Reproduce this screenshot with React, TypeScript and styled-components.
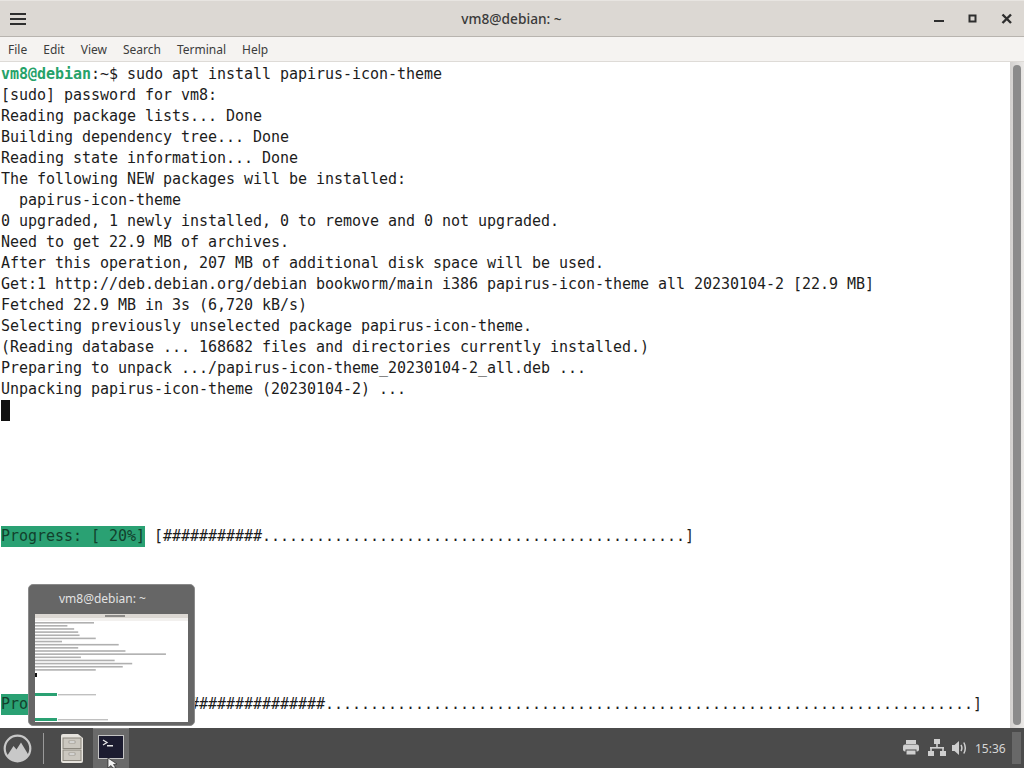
import styled, { createGlobalStyle } from "styled-components";

const GlobalStyle = createGlobalStyle`
  html, body {
    margin: 0;
    padding: 0;
    height: 100%;
    overflow: hidden;
    background: #fff;
  }
`;

const outputBefore = [
  "[sudo] password for vm8:",
  "Reading package lists... Done",
  "Building dependency tree... Done",
  "Reading state information... Done",
  "The following NEW packages will be installed:",
  "  papirus-icon-theme",
  "0 upgraded, 1 newly installed, 0 to remove and 0 not upgraded.",
  "Need to get 22.9 MB of archives.",
  "After this operation, 207 MB of additional disk space will be used.",
  "Get:1 http://deb.debian.org/debian bookworm/main i386 papirus-icon-theme all 20230104-2 [22.9 MB]",
  "Fetched 22.9 MB in 3s (6,720 kB/s)",
  "Selecting previously unselected package papirus-icon-theme.",
  "(Reading database ... 168682 files and directories currently installed.)",
  "Preparing to unpack .../papirus-icon-theme_20230104-2_all.deb ...",
  "Unpacking papirus-icon-theme (20230104-2) ...",
];

const menus = ["File", "Edit", "View", "Search", "Terminal", "Help"];

const App = () => {
  return (
    <Page>
      <GlobalStyle />
      <TitleBar>
        <TitleSide>
          <MenuIcon>
            <span />
            <span />
            <span />
          </MenuIcon>
        </TitleSide>
        <WindowTitle>vm8@debian: ~</WindowTitle>
        <WindowButtons>
          <svg width="12" height="12" viewBox="0 0 12 12">
            <rect x="1" y="7" width="10" height="2" fill="#2e2e2e" />
          </svg>
          <svg width="12" height="12" viewBox="0 0 12 12">
            <rect x="2.5" y="2.5" width="6" height="6" fill="none" stroke="#2e2e2e" strokeWidth="2" />
          </svg>
          <svg width="12" height="12" viewBox="0 0 12 12">
            <path d="M1.5 1.5 L10 10 M10 1.5 L1.5 10" stroke="#2e2e2e" strokeWidth="2.4" />
          </svg>
        </WindowButtons>
      </TitleBar>

      <MenuBar>
        {menus.map((m) => (
          <MenuItem key={m}>{m}</MenuItem>
        ))}
      </MenuBar>

      <TerminalArea>
        <Screen>
          <Line>
            <Prompt>vm8@debian</Prompt>:~$ sudo apt install papirus-icon-theme
          </Line>
          {outputBefore.map((l, i) => (
            <Line key={i}>{l}</Line>
          ))}
          <Line>
            <Cursor />
          </Line>
          <Blank $rows={5} />
          <Line>
            <ProgressLabel>Progress: [ 20%]</ProgressLabel>
            {" [" + "#".repeat(11) + ".".repeat(47) + "]"}
          </Line>
          <Blank $rows={7} />
          <Line>
            <ProgressLabel>Progress: [ 20%]</ProgressLabel>
            {" [" + "#".repeat(18) + ".".repeat(72) + "]"}
          </Line>
        </Screen>
        <ScrollTrack>
          <ScrollThumb />
        </ScrollTrack>
      </TerminalArea>

      <Taskbar>
        <TaskLeft>
          <LogoButton>
            <svg width="29" height="29" viewBox="0 0 29 29">
              <circle cx="14.5" cy="14.5" r="12.8" fill="#4b4b4b" stroke="#c8c8c8" strokeWidth="2.2" />
              <path d="M4 22 L10.5 12 L13.5 15.5 L18 8.5 L25.5 21 Q21 27 14.5 27 Q8 27 4 22 Z" fill="#c8c8c8" />
            </svg>
          </LogoButton>
          <Separator />
          <AppButton>
            <svg width="22" height="29" viewBox="0 0 22 29">
              <path d="M2 0 H17 L22 4 V27 Q22 29 20 29 H2 Q0 29 0 27 V2 Q0 0 2 0 Z" fill="#e6e3dd" />
              <rect x="2" y="4" width="18" height="10.5" fill="#cbc7bf" stroke="#8c887f" />
              <rect x="2" y="16" width="18" height="10.5" fill="#cbc7bf" stroke="#8c887f" />
              <rect x="8" y="7" width="6" height="2" fill="#f2f2f2" stroke="#77736b" strokeWidth="0.5" />
              <rect x="8" y="19" width="6" height="2" fill="#f2f2f2" stroke="#77736b" strokeWidth="0.5" />
            </svg>
          </AppButton>
          <AppButton $active>
            <TerminalIcon width="26" height="24" viewBox="0 0 26 24">
              <rect x="0.5" y="0.5" width="25" height="23" fill="#1c1c30" stroke="#c4c4c4" />
              <path d="M5 5 L9 7.5 L5 10" fill="none" stroke="#e8e8e8" strokeWidth="1.3" />
              <rect x="9" y="10" width="6" height="1.5" fill="#e8e8e8" />
            </TerminalIcon>
            <MousePointer width="12" height="10" viewBox="0 0 12 10">
              <path d="M1 0 L1 10 L4 7.5 L6 10 L9 10 L6.5 6.5 L10 6 Z" fill="#f2f2f2" stroke="#222" strokeWidth="0.7" />
            </MousePointer>
          </AppButton>
        </TaskLeft>
        <Tray>
          <svg width="18" height="16" viewBox="0 0 18 16">
            <rect x="4" y="0" width="10" height="4" fill="#cfcfcf" />
            <rect x="1" y="4.5" width="16" height="7" rx="2" fill="#cfcfcf" />
            <rect x="4" y="10" width="10" height="5" fill="#cfcfcf" stroke="#4a4a4a" />
          </svg>
          <svg width="18" height="18" viewBox="0 0 18 18">
            <rect x="6" y="0" width="6" height="5" fill="#cfcfcf" />
            <rect x="8.2" y="5" width="1.6" height="3.5" fill="#cfcfcf" />
            <rect x="2" y="8" width="14" height="1.6" fill="#cfcfcf" />
            <rect x="2.2" y="9" width="1.6" height="3" fill="#cfcfcf" />
            <rect x="14.2" y="9" width="1.6" height="3" fill="#cfcfcf" />
            <rect x="0" y="12" width="6" height="5" fill="#cfcfcf" />
            <rect x="12" y="12" width="6" height="5" fill="#cfcfcf" />
          </svg>
          <VolumeIcon width="15" height="16" viewBox="0 0 15 16">
            <path d="M0 5 H2.5 L7 1 V15 L2.5 11 H0 Z" fill="#cfcfcf" />
            <path d="M9 5 Q10.8 8 9 11 M11.8 2.5 Q14.8 8 11.8 13.5" fill="none" stroke="#cfcfcf" strokeWidth="1.5" />
          </VolumeIcon>
          <Clock>15:36</Clock>
          <TrayHandle />
        </Tray>
      </Taskbar>

      <Preview>
        <PreviewTitle>vm8@debian: ~</PreviewTitle>
        <PreviewShot>
          <svg width="153" height="108" viewBox="0 0 153 108">
            <rect width="153" height="108" fill="#fff" />
            <rect width="153" height="4" fill="#dcd8d3" />
            <rect x="70" y="1" width="20" height="2" fill="#8c8a88" />
            <rect y="4" width="153" height="3" fill="#f2f0ee" />
            <rect x="0" y="8" width="59" height="1.6" fill="#b0b0b0" />
            {outputBefore.map((l, i) => (
              <rect key={i} x="0" y={11 + i * 3.15} width={l.length * 1.35} height="1.6" fill="#b0b0b0" />
            ))}
            <rect x="0" y="59" width="2" height="4" fill="#111" />
            <rect x="0" y="79" width="22" height="3" fill="#2aa173" />
            <rect x="23" y="80" width="38" height="1.4" fill="#c0c0c0" />
            <rect x="0" y="104" width="22" height="3" fill="#2aa173" />
            <rect x="23" y="105" width="50" height="1.4" fill="#c0c0c0" />
          </svg>
        </PreviewShot>
      </Preview>
    </Page>
  );
};

const Page = styled.div`
  position: relative;
  width: 1024px;
  height: 768px;
  display: flex;
  flex-direction: column;
  overflow: hidden;
  background: #fff;
`;

const TitleBar = styled.div`
  height: 37px;
  flex: none;
  box-sizing: border-box;
  display: flex;
  align-items: center;
  padding: 0 10px;
  background: #dcd8d3;
  border-top: 1px solid #e8e5e1;
  border-bottom: 1px solid #b8b4af;
`;

const TitleSide = styled.div`
  width: 90px;
`;

const MenuIcon = styled.div`
  width: 16px;
  display: flex;
  flex-direction: column;
  gap: 3px;
  span {
    display: block;
    height: 2px;
    background: #2e2e2e;
  }
`;

const WindowTitle = styled.div`
  flex: 1;
  text-align: center;
  font: 500 13.7px "Noto Sans", sans-serif;
  color: #3a3a3a;
`;

const WindowButtons = styled.div`
  width: 90px;
  box-sizing: border-box;
  display: flex;
  align-items: center;
  justify-content: flex-end;
  gap: 22px;
  margin-right: 1px;
`;

const MenuBar = styled.div`
  height: 25px;
  flex: none;
  box-sizing: border-box;
  display: flex;
  align-items: center;
  gap: 16px;
  padding-left: 8px;
  background: #f5f3f1;
  border-bottom: 1px solid #dedbd7;
`;

const MenuItem = styled.div`
  font: 12px "Noto Sans", sans-serif;
  color: #3c3c3c;
`;

const TerminalArea = styled.div`
  flex: 1;
  min-height: 0;
  display: flex;
  background: #fff;
`;

const Screen = styled.div`
  flex: 1;
  padding: 2px 0 0 1px;
  font: 15px/21px "DejaVu Sans Mono", monospace;
  letter-spacing: -0.03px;
  color: #1c1c1c;
  white-space: pre;
  overflow: hidden;
`;

const Line = styled.div`
  height: 21px;
`;

const Blank = styled.div<{ $rows: number }>`
  height: ${(p) => p.$rows * 21}px;
`;

const Prompt = styled.span`
  color: #26a269;
  font-weight: bold;
`;

const Cursor = styled.span`
  display: inline-block;
  width: 9px;
  height: 21px;
  background: #111;
`;

const ProgressLabel = styled.span`
  display: inline-block;
  background: #2aa173;
  color: #12402c;
`;

const ScrollTrack = styled.div`
  width: 14px;
  flex: none;
  box-sizing: border-box;
  padding: 3px;
  background: linear-gradient(to right, #d2d0ce, #ebe9e7);
`;

const ScrollThumb = styled.div`
  height: 100%;
  background: #8b8b8b;
  border-radius: 4px;
`;

const Taskbar = styled.div`
  height: 40px;
  flex: none;
  display: flex;
  align-items: center;
  justify-content: space-between;
  background: #4b4b4b;
`;

const TaskLeft = styled.div`
  display: flex;
  align-items: center;
  height: 100%;
`;

const LogoButton = styled.div`
  width: 34px;
  display: flex;
  justify-content: center;
`;

const Separator = styled.div`
  width: 1px;
  height: 31px;
  margin: 0 10px 0 9px;
  background: #9a9a9a;
`;

const AppButton = styled.div<{ $active?: boolean }>`
  position: relative;
  width: 36px;
  height: 100%;
  box-sizing: border-box;
  margin-left: ${(p) => (p.$active ? "3px" : "0")};
  display: flex;
  align-items: center;
  justify-content: center;
  background: ${(p) => (p.$active ? "#6a6a6a" : "transparent")};
  border-top: ${(p) => (p.$active ? "1px solid #868686" : "none")};
`;

const TerminalIcon = styled.svg`
  margin-bottom: 3px;
`;

const MousePointer = styled.svg`
  position: absolute;
  left: 14px;
  bottom: 0;
`;

const Tray = styled.div`
  display: flex;
  align-items: center;
  gap: 8px;
  height: 100%;
  padding-right: 3px;
`;

const VolumeIcon = styled.svg`
  margin-left: -2px;
`;

const Clock = styled.div`
  width: 30px;
  font: 12px "Noto Sans", sans-serif;
  color: #d6d6d6;
`;

const TrayHandle = styled.div`
  width: 9px;
  height: 32px;
  margin-left: -1px;
  background: #686868;
`;

const Preview = styled.div`
  position: absolute;
  left: 28px;
  top: 584px;
  width: 167px;
  height: 142px;
  box-sizing: border-box;
  padding: 0 6px 4px;
  display: flex;
  flex-direction: column;
  border-radius: 5px;
  background: #666;
  border: 1px solid #8a8a8a;
`;

const PreviewTitle = styled.div`
  height: 29px;
  flex: none;
  box-sizing: border-box;
  padding: 0 0 2px 24px;
  display: flex;
  align-items: center;
  font: 12px "Noto Sans", sans-serif;
  color: #e2e2e2;
`;

const PreviewShot = styled.div`
  width: 153px;
  height: 108px;
  svg {
    display: block;
  }
`;

export default App;
